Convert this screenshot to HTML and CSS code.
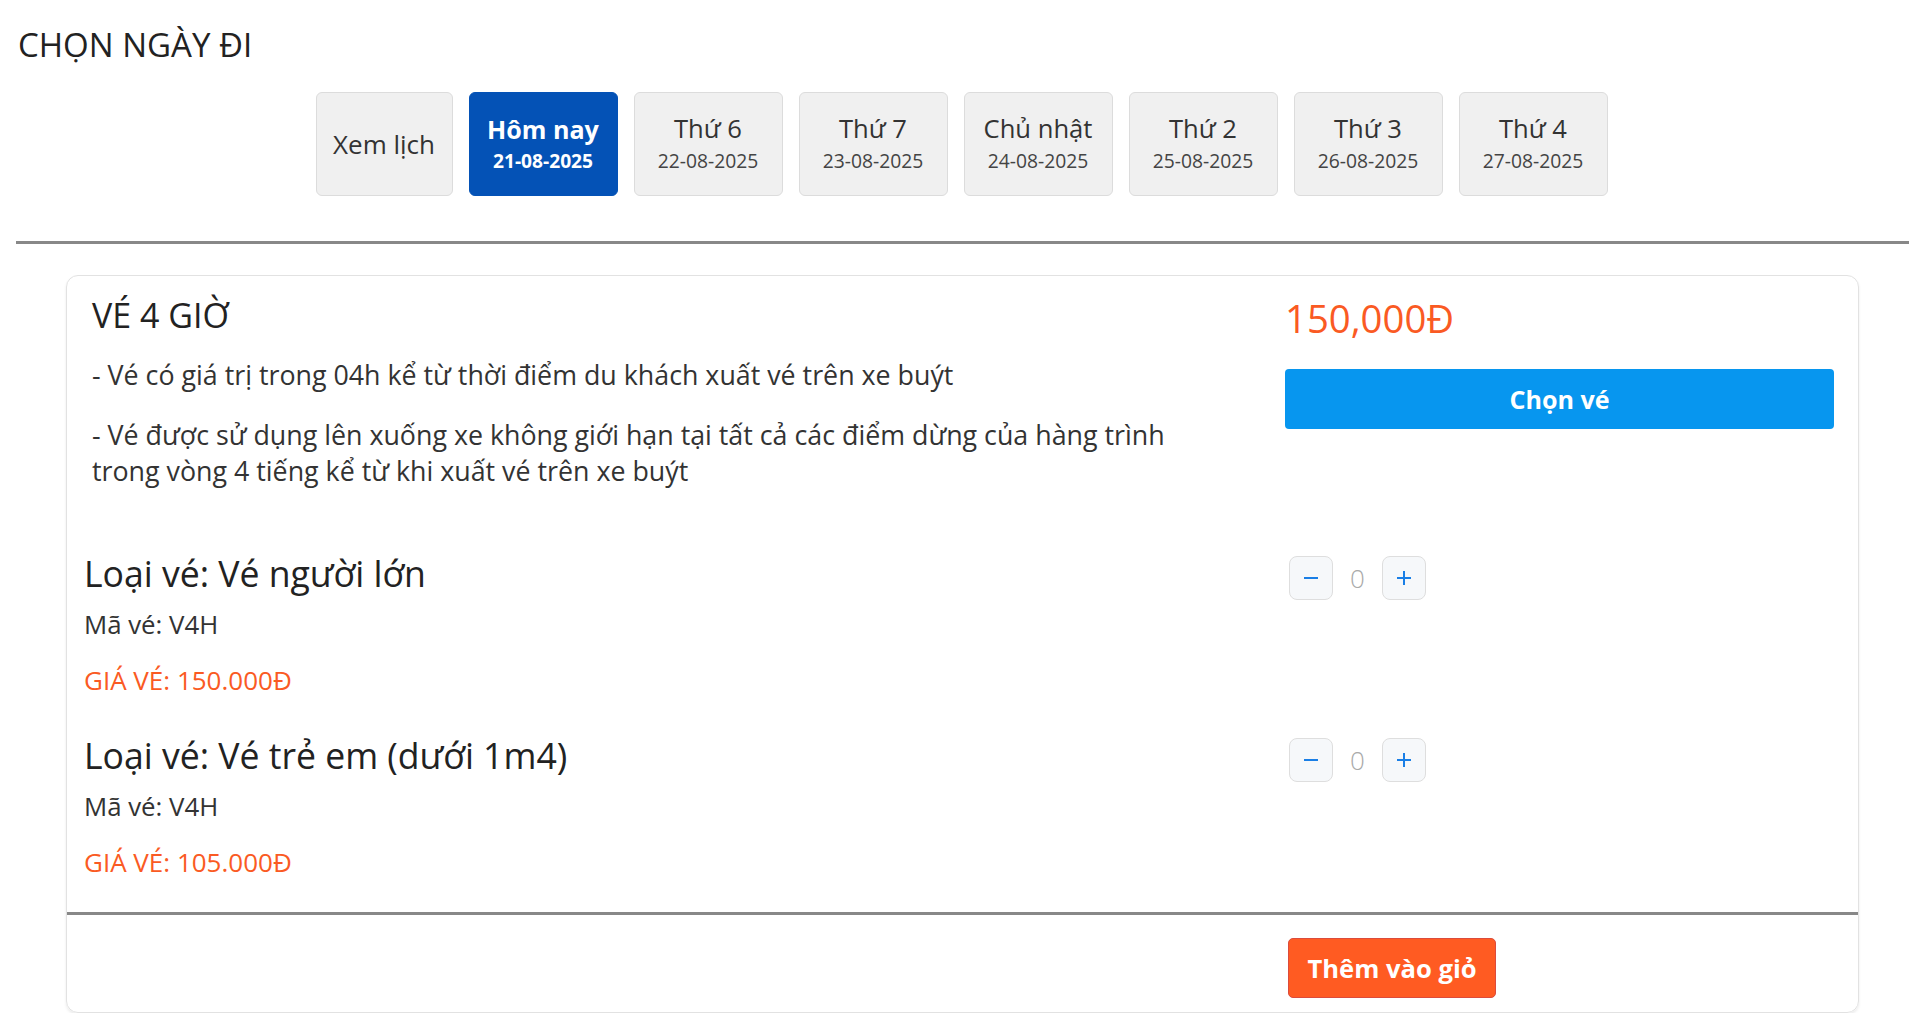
FILE: index.html
```html
<!DOCTYPE html>
<html lang="vi">
<head>
    <meta charset="UTF-8">
    <meta name="viewport" content="width=device-width, initial-scale=1.0">
    <title>Chọn ngày đi</title>
    <link rel="stylesheet" href="styles.css">
</head>
<body>
    <div class="page">
        <h2 class="page-title">CHỌN NGÀY ĐI</h2>

        <div class="date-list">
            <button class="date-item date-calendar">Xem lịch</button>
            <button class="date-item active">
                <span class="date-day">Hôm nay</span>
                <span class="date-value">21-08-2025</span>
            </button>
            <button class="date-item">
                <span class="date-day">Thứ 6</span>
                <span class="date-value">22-08-2025</span>
            </button>
            <button class="date-item">
                <span class="date-day">Thứ 7</span>
                <span class="date-value">23-08-2025</span>
            </button>
            <button class="date-item">
                <span class="date-day">Chủ nhật</span>
                <span class="date-value">24-08-2025</span>
            </button>
            <button class="date-item">
                <span class="date-day">Thứ 2</span>
                <span class="date-value">25-08-2025</span>
            </button>
            <button class="date-item">
                <span class="date-day">Thứ 3</span>
                <span class="date-value">26-08-2025</span>
            </button>
            <button class="date-item">
                <span class="date-day">Thứ 4</span>
                <span class="date-value">27-08-2025</span>
            </button>
        </div>

        <hr class="divider">

        <div class="ticket-card">
            <div class="ticket-head">
                <div class="ticket-info">
                    <h3 class="ticket-name">VÉ 4 GIỜ</h3>
                    <p class="ticket-desc">- Vé có giá trị trong 04h kể từ thời điểm du khách xuất vé trên xe buýt</p>
                    <p class="ticket-desc">- Vé được sử dụng lên xuống xe không giới hạn tại tất cả các điểm dừng của hàng trình trong vòng 4 tiếng kể từ khi xuất vé trên xe buýt</p>
                </div>
                <div class="ticket-buy">
                    <div class="ticket-price">150,000Đ</div>
                    <button class="btn-choose">Chọn vé</button>
                </div>
            </div>

            <div class="ticket-types">
                <div class="ticket-type">
                    <div>
                        <div class="type-name">Loại vé: Vé người lớn</div>
                        <div class="type-code">Mã vé: V4H</div>
                        <div class="type-price">GIÁ VÉ: 150.000Đ</div>
                    </div>
                    <div class="qty">
                        <button class="qty-btn" aria-label="Giảm">
                            <svg width="16" height="16" viewBox="0 0 16 16"><path d="M1 8h14" stroke="#1a7fe6" stroke-width="2"/></svg>
                        </button>
                        <span class="qty-value">0</span>
                        <button class="qty-btn" aria-label="Tăng">
                            <svg width="16" height="16" viewBox="0 0 16 16"><path d="M1 8h14M8 1v14" stroke="#1a7fe6" stroke-width="2"/></svg>
                        </button>
                    </div>
                </div>
                <div class="ticket-type">
                    <div>
                        <div class="type-name">Loại vé: Vé trẻ em (dưới 1m4)</div>
                        <div class="type-code">Mã vé: V4H</div>
                        <div class="type-price">GIÁ VÉ: 105.000Đ</div>
                    </div>
                    <div class="qty">
                        <button class="qty-btn" aria-label="Giảm">
                            <svg width="16" height="16" viewBox="0 0 16 16"><path d="M1 8h14" stroke="#1a7fe6" stroke-width="2"/></svg>
                        </button>
                        <span class="qty-value">0</span>
                        <button class="qty-btn" aria-label="Tăng">
                            <svg width="16" height="16" viewBox="0 0 16 16"><path d="M1 8h14M8 1v14" stroke="#1a7fe6" stroke-width="2"/></svg>
                        </button>
                    </div>
                </div>
            </div>

            <hr class="divider card-divider">

            <div class="ticket-foot">
                <div></div>
                <div>
                    <button class="btn-cart">Thêm vào giỏ</button>
                </div>
            </div>
        </div>
    </div>
</body>
</html>
```

FILE: styles.css
```css
body {
    margin: 0;
    font-family: "Open Sans", "Noto Sans", sans-serif;
    color: #333;
    background: #fff;
}
.page {
    padding: 25px 11px 0 16px;
}
.page-title {
    margin: 0 0 0 2px;
    font-size: 33px;
    line-height: 40px;
    font-weight: 400;
    color: #222;
}
.date-list {
    display: flex;
    justify-content: center;
    gap: 16px;
    margin-top: 27px;
    padding-right: 2px;
}
.date-item {
    width: 149px;
    height: 104px;
    display: flex;
    flex-direction: column;
    align-items: center;
    justify-content: center;
    padding: 0;
    background: #f0f0f0;
    border: 1px solid #dcdcdc;
    border-radius: 6px;
    font-family: inherit;
    color: #333;
    cursor: pointer;
}
.date-calendar {
    width: 137px;
    font-size: 26px;
    line-height: 34px;
}
.date-day {
    font-size: 25.6px;
    line-height: 34px;
}
.date-value {
    font-size: 19.3px;
    line-height: 30px;
    color: #444;
}
.date-item.active {
    background: #0452b6;
    border-color: #0452b6;
    color: #fff;
}
.date-item.active .date-day {
    font-size: 25.1px;
    font-weight: 700;
}
.date-item.active .date-value {
    font-size: 19.2px;
    font-weight: 700;
    color: #fff;
}
.divider {
    margin: 45px 0 0;
    border: 0;
    height: 3px;
    background: #888;
}
.ticket-card {
    margin: 31px 50px 0;
    border: 1px solid #e2e2e2;
    border-radius: 12px;
    box-shadow: 0 2px 3px rgba(0, 0, 0, 0.08);
    overflow: hidden;
}
.ticket-head,
.ticket-type,
.ticket-foot {
    display: grid;
    grid-template-columns: 1fr 549px;
    column-gap: 30px;
    padding: 0 24px 0 17px;
}
.ticket-head {
    grid-template-columns: 1100px 549px;
    justify-content: space-between;
    padding: 19px 24px 0 25px;
}
.ticket-name {
    margin: 0;
    font-size: 34px;
    line-height: 40px;
    font-weight: 400;
    color: #222;
}
.ticket-desc {
    margin: 24px 0 0;
    font-size: 26.8px;
    line-height: 36px;
    color: #333;
}
.ticket-name + .ticket-desc {
    margin-top: 22px;
}
.ticket-price {
    margin-top: 1px;
    font-size: 38.3px;
    line-height: 44px;
    color: #fa5a23;
}
.btn-choose {
    display: block;
    width: 100%;
    height: 60px;
    margin-top: 29px;
    background: #0796ef;
    color: #fff;
    border: 0;
    border-radius: 4px;
    font-family: inherit;
    font-size: 25.1px;
    font-weight: 700;
    cursor: pointer;
}
.ticket-types {
    padding-top: 62px;
}
.ticket-type + .ticket-type {
    margin-top: 36px;
}
.type-name {
    font-size: 35.6px;
    line-height: 44px;
    color: #222;
}
.type-code {
    margin-top: 12px;
    font-size: 25.8px;
    line-height: 34px;
    color: #333;
}
.type-price {
    margin-top: 22px;
    font-size: 26px;
    line-height: 34px;
    color: #fa5a23;
}
.qty {
    display: flex;
    align-items: center;
    align-self: start;
    margin: 5px 0 0 4px;
}
.qty-btn {
    width: 44px;
    height: 44px;
    display: flex;
    align-items: center;
    justify-content: center;
    padding: 0;
    background: #f6f8fa;
    border: 1px solid #dedede;
    border-radius: 8px;
    cursor: pointer;
}
.qty-value {
    width: 49px;
    text-align: center;
    font-size: 26px;
    font-weight: 300;
    line-height: 44px;
    color: #aaa;
}
.card-divider {
    margin-top: 33px;
}
.ticket-foot {
    padding-top: 23px;
    padding-bottom: 14px;
}
.btn-cart {
    width: 208px;
    height: 60px;
    margin-left: 3px;
    background: #ff5b22;
    color: #fff;
    border: 1px solid #dc4b3c;
    border-radius: 5px;
    font-family: inherit;
    font-size: 25.6px;
    font-weight: 700;
    cursor: pointer;
}
```
